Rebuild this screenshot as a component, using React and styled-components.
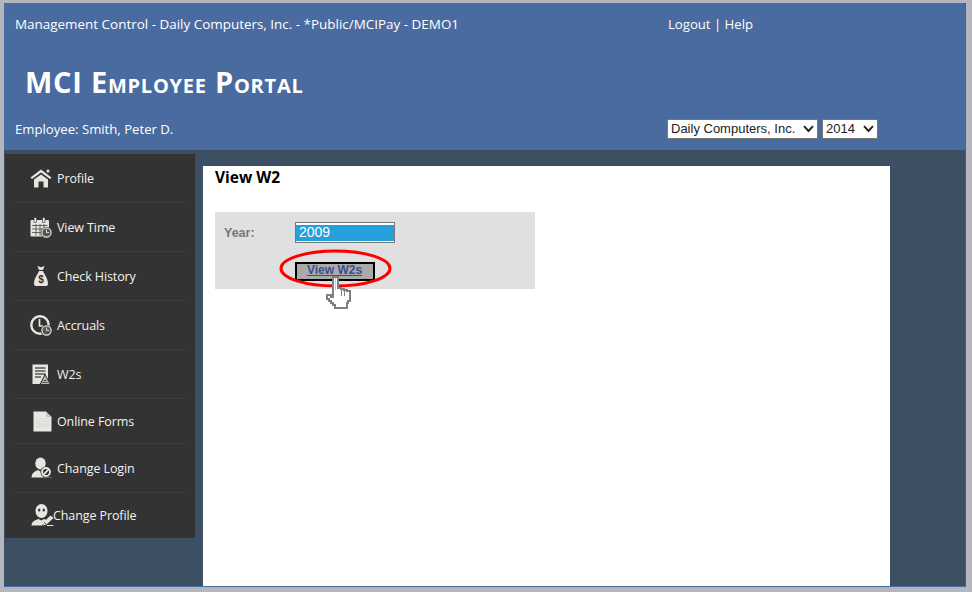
import React from 'react';
import styled, { createGlobalStyle } from 'styled-components';

const ICON = '#e6e6e0';

const chevron =
  "data:image/svg+xml,%3Csvg xmlns='http://www.w3.org/2000/svg' width='11' height='8' viewBox='0 0 11 8'%3E%3Cpath d='M1 1.2 L5.5 6 L10 1.2' fill='none' stroke='%23222' stroke-width='1.9'/%3E%3C/svg%3E";

const GlobalStyle = createGlobalStyle`
  html, body { margin: 0; padding: 0; height: 100%; overflow: hidden; background: #b4b5bd; }
  body { font-family: "Open Sans", "Noto Sans", sans-serif; }
`;

const Frame = styled.div`
  width: 962px;
  height: 584px;
  margin: 3px 0 0 4px;
  display: flex;
  flex-direction: column;
  background: #3c4f63;
  border-right: 1px solid #4a6070;
  border-bottom: 1px solid #4a6ba0;
  box-sizing: border-box;
`;

const Header = styled.header`
  height: 147px;
  flex: none;
  background: #4a6ba0;
  color: #fff;
  display: grid;
  grid-template-columns: 664px 1fr;
  grid-template-rows: 48px 62px 1fr;
`;

const HeaderText = styled.div`
  font-size: 13.45px;
  padding: 13px 0 0 11px;
  line-height: 17px;
`;

const RightText = styled(HeaderText)`
  padding-left: 0;
  font-size: 13.15px;
`;

const EmployeeText = styled(HeaderText)`
  font-size: 13.15px;
  padding-top: 8px;
`;

const Title = styled.h1`
  grid-column: 1 / 3;
  margin: 0;
  padding: 0 0 0 21px;
  font-size: 29px;
  line-height: 62px;
  font-weight: 700;
  font-variant: small-caps;
  letter-spacing: 0.75px;
`;

const Selects = styled.div`
  display: flex;
  gap: 4px;
  padding: 6px 0 0 0;
  margin-left: -1px;
`;

const CompanySelect = styled.select`
  appearance: none;
  width: ${(p) => p.$w}px;
  height: 20px;
  border: 1px solid #767676;
  border-radius: 0;
  background: #fff url("${chevron}") no-repeat right 3px center;
  color: #222;
  font-family: "Liberation Sans", Arial, sans-serif;
  font-size: 13px;
  padding: 0 0 2px 3px;
  outline: none;
`;

const Body = styled.div`
  flex: 1;
  display: flex;
  align-items: stretch;
  min-height: 0;
`;

const Sidebar = styled.nav`
  width: 190px;
  margin: 4px 0 0 1px;
  align-self: flex-start;
  background: #333;
  display: flex;
  flex-direction: column;
`;

const NavRow = styled.a`
  height: ${(p) => p.$h}px;
  box-sizing: border-box;
  margin: 0 10px;
  padding-left: 15px;
  display: flex;
  align-items: center;
  color: #f2f2f2;
  font-size: 12.5px;
  letter-spacing: -0.1px;
  border-bottom: 1px solid ${(p) => (p.$last ? 'transparent' : '#3d3d3d')};
`;

const NavIconBox = styled.span`
  width: ${(p) => p.$w || 27}px;
  flex: none;
  display: flex;
  align-items: center;
  svg { display: block; }
`;

const IconPad = styled.span`
  padding-left: ${(p) => p.$pad || 0}px;
  display: block;
`;

const Main = styled.main`
  width: 687px;
  margin: 16px 0 0 8px;
  background: #fff;
  padding: 0 12px;
  box-sizing: border-box;
`;

const PageTitle = styled.h2`
  margin: 0;
  padding-top: 1px;
  font-size: 15.5px;
  line-height: 20px;
  font-weight: 700;
  color: #000;
`;

const FormPanel = styled.div`
  position: relative;
  width: 320px;
  height: 77px;
  margin-top: 25px;
  background: #e0e0e0;
  padding: 10px 0 0 9px;
  box-sizing: border-box;
  font-family: "Liberation Sans", Arial, sans-serif;
`;

const FieldRow = styled.div`
  display: flex;
  align-items: center;
  height: 21px;
`;

const FieldLabel = styled.label`
  width: 71px;
  padding-top: 1px;
  font-size: 12.5px;
  font-weight: 700;
  color: #777;
`;

const YearBox = styled.div`
  width: 100px;
  height: 21px;
  box-sizing: border-box;
  border: 1px solid #777;
  padding: 2px 0 1px;
  background: #fff;
  display: flex;
`;

const YearValue = styled.div`
  flex: 1;
  background: #26a0da;
  color: #fff;
  font-size: 14px;
  line-height: 15px;
  padding-left: 3px;
`;

const ButtonRow = styled.div`
  margin: 17px 0 0 71px;
`;

const ViewButton = styled.button`
  width: 80px;
  height: 19px;
  box-sizing: border-box;
  border: 2px solid #000;
  background: #aaa;
  padding: 0 1px 2px 0;
  font-family: inherit;
  font-size: 12px;
  font-weight: 700;
  line-height: 12px;
  color: #3a4f85;
  text-decoration: underline;
`;

const Highlight = styled.svg`
  position: absolute;
  left: 64px;
  top: 37px;
  pointer-events: none;
`;

const HandCursor = styled.svg`
  position: absolute;
  left: 111px;
  top: 64px;
  pointer-events: none;
`;

const HomeIcon = () => (
  <svg width="22" height="19" viewBox="0 0 22 19">
    <path d="M0.5 8.5 L11 0.5 L21.5 8.5 L20 10 L11 3.4 L2 10 Z" fill={ICON} />
    <rect x="16.5" y="0.5" width="3" height="3" rx="1.5" fill={ICON} />
    <path d="M4 10.5 L11 5.4 L18 10.5 V18.5 H13.5 V12.5 H8.5 V18.5 H4 Z" fill={ICON} />
  </svg>
);

const SmallClock = ({ cx, cy, r = 4.6 }) => (
  <g>
    <circle cx={cx} cy={cy} r={r + 1.2} fill="#333" />
    <circle cx={cx} cy={cy} r={r} fill="#555" stroke={ICON} strokeWidth="1.2" />
    <path d={`M${cx} ${cy - 3} V${cy} H${cx + 2.5}`} fill="none" stroke={ICON} strokeWidth="0.9" />
  </g>
);

const CalendarIcon = () => (
  <svg width="22" height="21" viewBox="0 0 22 21">
    <rect x="0.5" y="3" width="18.5" height="16.5" rx="1" fill={ICON} />
    <rect x="4" y="0.5" width="2.5" height="5" fill={ICON} stroke="#333" strokeWidth="0.6" />
    <rect x="12.5" y="0.5" width="2.5" height="5" fill={ICON} stroke="#333" strokeWidth="0.6" />
    <path d="M2 8.5H17.5M2 12H17.5M2 15.5H17.5M6 7V18.5M10 7V18.5M14 7V18.5" stroke="#555" strokeWidth="0.9" />
    <SmallClock cx={16.5} cy={15.5} />
  </svg>
);

const BagIcon = () => (
  <svg width="16" height="22" viewBox="0 0 16 22">
    <path d="M4.5 1 L8 2.2 L11.5 1 L10 5 H6 Z" fill={ICON} />
    <path d="M6 6 H10 C11 9 15 13 15 19 Q15 21 13 21 H3 Q1 21 1 19 C1 13 5 9 6 6 Z" fill={ICON} />
    <text x="8" y="18" textAnchor="middle" fontSize="10" fontWeight="700" fontFamily="Liberation Sans" fill="#333">$</text>
  </svg>
);

const AccrualIcon = () => (
  <svg width="22" height="21" viewBox="0 0 22 21">
    <circle cx="10" cy="10" r="8.7" fill="none" stroke={ICON} strokeWidth="2.4" />
    <path d="M9.5 4 V11 H13" fill="none" stroke={ICON} strokeWidth="1.7" />
    <SmallClock cx={16.5} cy={15.5} />
  </svg>
);

const W2Icon = () => (
  <svg width="19" height="21" viewBox="0 0 19 21">
    <path d="M0.5 0.5 H16 V20 H0.5 Z" fill={ICON} />
    <path d="M3 4H13.5M3 7H13.5M3 10H13.5M3 13H9" stroke="#555" strokeWidth="1.3" />
    <path d="M13 9.5 L19 20.5 H7.5 Z" fill="#333" />
    <path d="M13 11.5 L17.5 20 H9 Z" fill="#bbb" />
    <path d="M11.5 16.5H14.5M10.5 18.5H15.5" stroke="#333" strokeWidth="0.8" />
  </svg>
);

const FormIcon = () => (
  <svg width="19" height="21" viewBox="0 0 19 21">
    <path d="M0.5 0.5 H13 L18.5 6 V20.5 H0.5 Z" fill="#e8e8e2" />
    <path d="M13 0.5 V6 H18.5 Z" fill="#c8c8c2" />
    <path d="M3 8H16M3 10.5H16M3 13H16M3 15.5H16" stroke="#d8d8d2" strokeWidth="1" />
  </svg>
);

const LoginIcon = () => (
  <svg width="21" height="22" viewBox="0 0 21 22">
    <ellipse cx="9.5" cy="6.5" rx="5.2" ry="6" fill={ICON} />
    <path d="M0.5 20.5 C0.5 16 4 14 7 13 L9.5 14.5 L12 13 C15 14 18 16 18 20.5 Z" fill={ICON} />
    <circle cx="15" cy="15" r="5.6" fill="#333" />
    <circle cx="15" cy="15" r="4" fill="none" stroke={ICON} strokeWidth="1.8" />
    <path d="M12.2 17.8 L17.8 12.2" stroke={ICON} strokeWidth="1.8" />
    <circle cx="19.8" cy="20.5" r="0.7" fill="#999" />
  </svg>
);

const ProfileIcon = () => (
  <svg width="23" height="22" viewBox="0 0 23 22">
    <ellipse cx="10.5" cy="7" rx="6" ry="7" fill={ICON} />
    <ellipse cx="8.2" cy="6" rx="1.2" ry="1.5" fill="#333" />
    <ellipse cx="12.8" cy="6" rx="1.2" ry="1.5" fill="#333" />
    <path d="M0.5 21.5 C0.5 17.5 4 16 7.5 15 L10.5 16.5 L13 15 L15.5 16 L11 21.5 Z" fill={ICON} />
    <path d="M12 21.5 L12.8 18 L19.5 11.5 L22.5 14 L15.5 20.5 Z" fill={ICON} />
    <path d="M12.8 18 L15.5 20.5" stroke="#333" strokeWidth="0.8" />
    <path d="M16 21.5 H22.5" stroke={ICON} strokeWidth="1" />
  </svg>
);

const navItems = [
  { label: 'Profile', Icon: HomeIcon, h: 49 },
  { label: 'View Time', Icon: CalendarIcon, h: 49 },
  { label: 'Check History', Icon: BagIcon, h: 49, pad: 3 },
  { label: 'Accruals', Icon: AccrualIcon, h: 49 },
  { label: 'W2s', Icon: W2Icon, h: 49, pad: 2 },
  { label: 'Online Forms', Icon: FormIcon, h: 45, pad: 3 },
  { label: 'Change Login', Icon: LoginIcon, h: 49, pad: 1 },
  { label: 'Change Profile', Icon: ProfileIcon, h: 45, pad: 1, w: 23, last: true },
];

export default function App() {
  return (
    <>
      <GlobalStyle />
      <Frame>
        <Header>
          <HeaderText>Management Control - Daily Computers, Inc. - *Public/MCIPay - DEMO1</HeaderText>
          <RightText>Logout | Help</RightText>
          <Title>MCI Employee Portal</Title>
          <EmployeeText>Employee: Smith, Peter D.</EmployeeText>
          <Selects>
            <CompanySelect $w={151} defaultValue="Daily Computers, Inc.">
              <option>Daily Computers, Inc.</option>
            </CompanySelect>
            <CompanySelect $w={56} defaultValue="2014">
              <option>2014</option>
            </CompanySelect>
          </Selects>
        </Header>
        <Body>
          <Sidebar>
            {navItems.map(({ label, Icon, h, pad, w, last }) => (
              <NavRow key={label} $h={h} $last={last}>
                <NavIconBox $w={w}>
                  <IconPad $pad={pad}>
                    <Icon />
                  </IconPad>
                </NavIconBox>
                {label}
              </NavRow>
            ))}
          </Sidebar>
          <Main>
            <PageTitle>View W2</PageTitle>
            <FormPanel>
              <FieldRow>
                <FieldLabel>Year:</FieldLabel>
                <YearBox>
                  <YearValue>2009</YearValue>
                </YearBox>
              </FieldRow>
              <ButtonRow>
                <ViewButton>View W2s</ViewButton>
              </ButtonRow>
              <Highlight width="113" height="39" viewBox="0 0 113 39">
                <ellipse cx="56.5" cy="19.5" rx="54.5" ry="17.5" fill="none" stroke="#f00" strokeWidth="3" />
              </Highlight>
              <HandCursor width="27" height="34" viewBox="0 0 27 34">
                <path
                  d="M7 1 H12 V12 H15 V13 H18 V14 H21 V15 H24 V25 H22 V27 H21 V32 H9 V29 H7 V27 H5 V25 H3 V23 H1 V19 H5 V21 H7 Z"
                  fill="#fff"
                  stroke="#808080"
                  strokeWidth="2"
                  shapeRendering="crispEdges"
                />
                <path d="M9 2 H10 V14 H9 Z" fill="#c8c8c8" shapeRendering="crispEdges" />
                <path d="M15 14 V20 M18 15 V20" stroke="#808080" strokeWidth="1" shapeRendering="crispEdges" />
              </HandCursor>
            </FormPanel>
          </Main>
        </Body>
      </Frame>
    </>
  );
}
